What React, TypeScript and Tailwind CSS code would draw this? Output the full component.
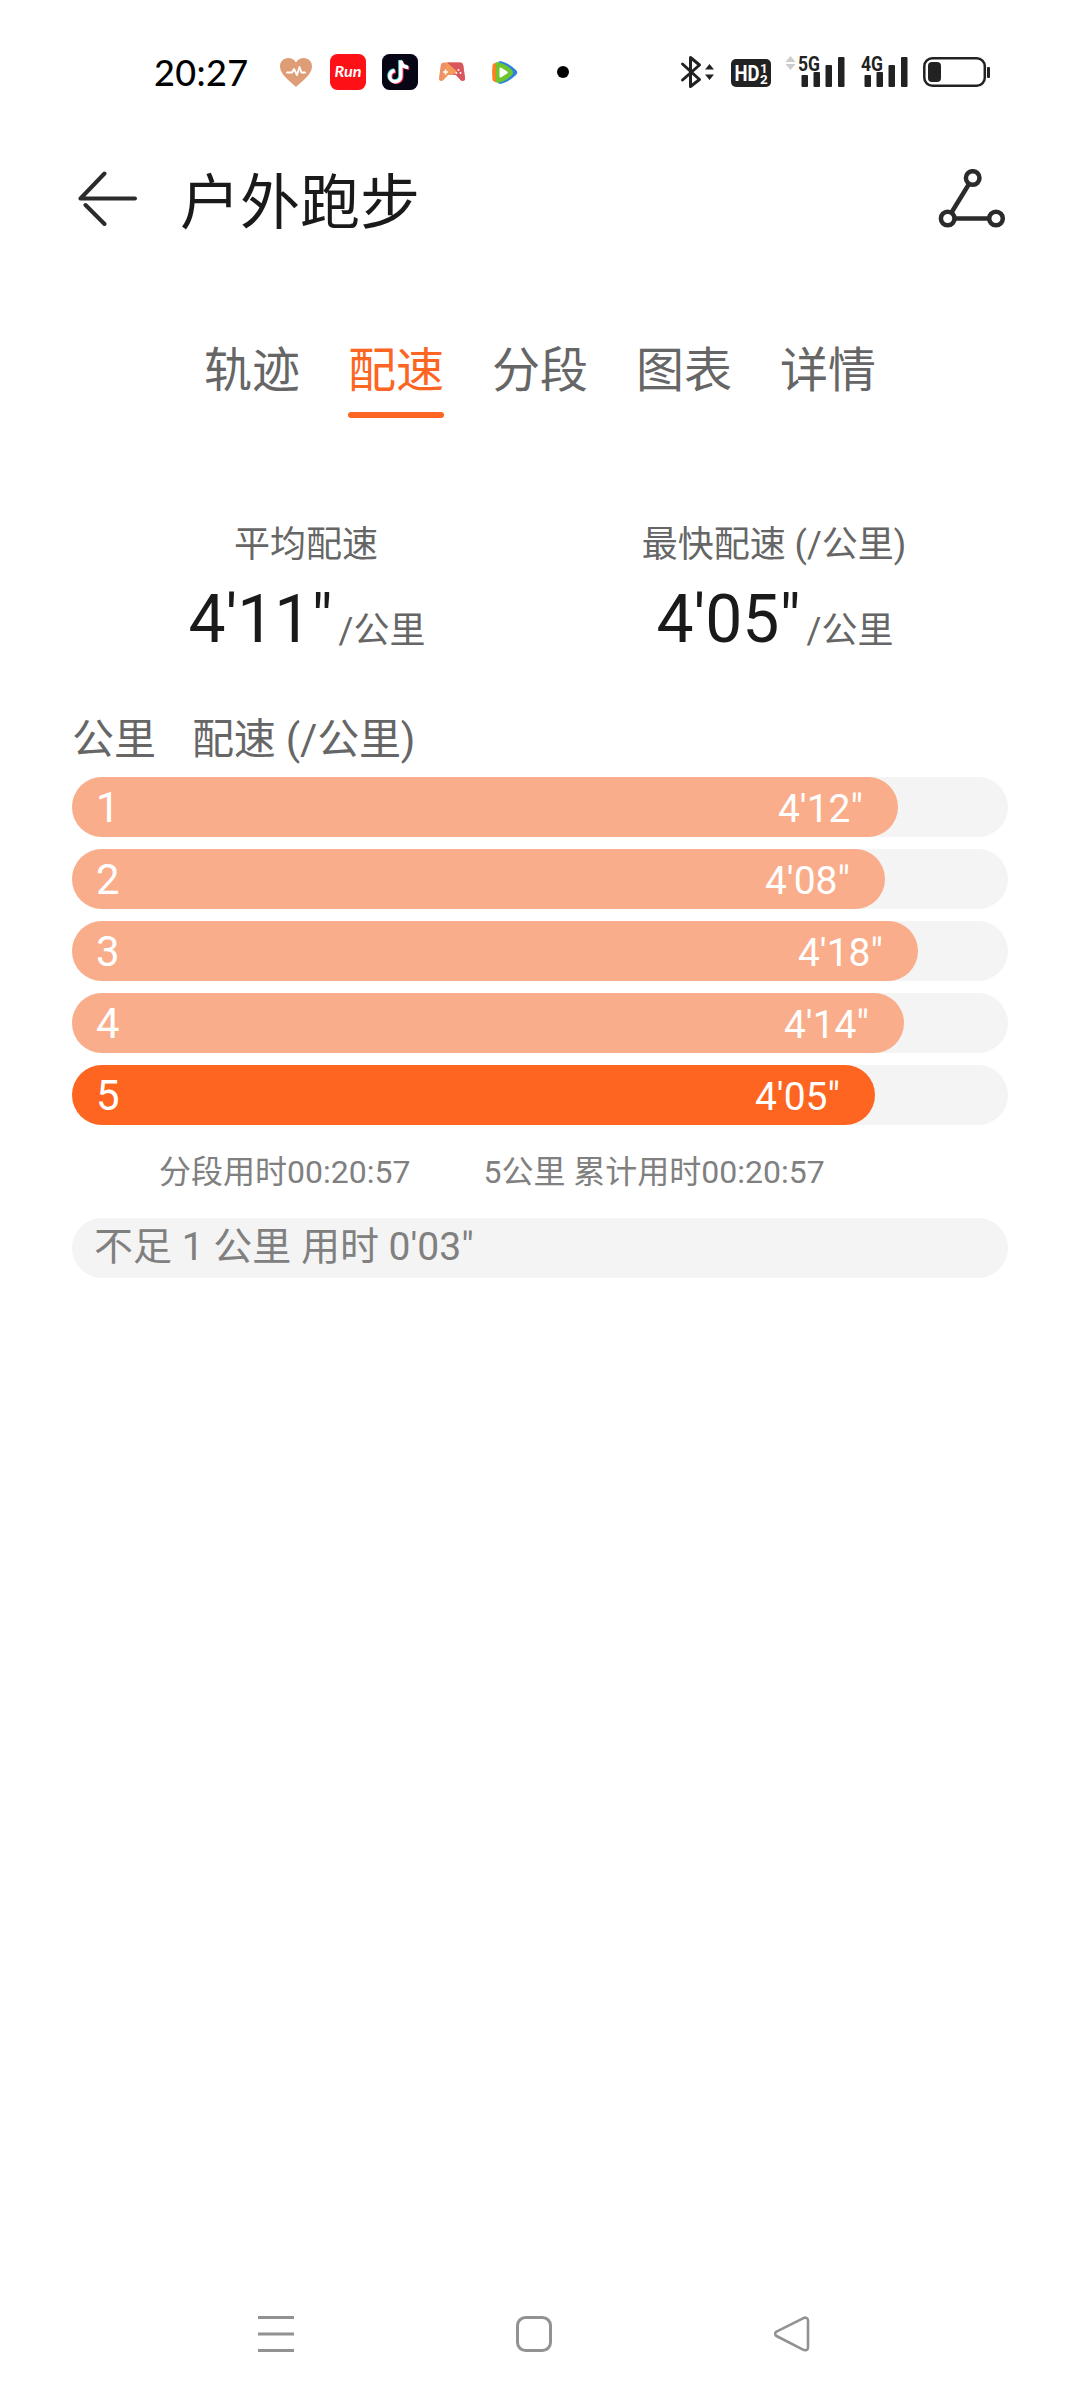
const TABS = ['轨迹', '配速', '分段', '图表', '详情'];

const STATS = [
  { label: '平均配速', value: '4\'11"' },
  { label: '最快配速 (/公里)', value: '4\'05"' },
];

const SPLITS = [
  { km: 1, pace: '4\'12"', width: 826 },
  { km: 2, pace: '4\'08"', width: 813 },
  { km: 3, pace: '4\'18"', width: 846 },
  { km: 4, pace: '4\'14"', width: 832 },
  { km: 5, pace: '4\'05"', width: 803, fastest: true },
];

function AppIcons() {
  return (
    <div className="flex items-center">
      <svg className="ml-8 h-9 w-8" viewBox="0 0 32 36">
        <path d="M16 33C11 28 0 20.500 0 12.500C0 7.500 3.600 4 8.300 4C11.500 4 14.400 5.700 16 8.500C17.600 5.700 20.500 4 23.700 4C28.400 4 32 7.500 32 12.500C32 20.500 21 28 16 33Z" fill="#de9d76" />
        <path d="M7 18.500h5l2-3.500 3 6 2.500-8 2 5.500H25" fill="none" stroke="#fff" strokeWidth="1.900" strokeLinecap="round" strokeLinejoin="round" />
      </svg>
      <svg className="ml-[18px] size-9" viewBox="0 0 36 36">
        <rect width="36" height="36" rx="7.500" fill="#fd1016" />
        <text x="4.500" y="23" fontFamily="Lato, sans-serif" fontStyle="italic" fontWeight="700" fontSize="15" fill="#fff" textLength="27" lengthAdjust="spacingAndGlyphs">Run</text>
      </svg>
      <svg className="ml-4 size-9" viewBox="0 0 36 36">
        <rect width="36" height="36" rx="7.500" fill="#070614" />
        <g fill="none" strokeWidth="3.500">
          <path d="M19 6.500v15.500a5.500 5.500 0 1 1-6-5.500M19 6.500c.6 4 3.400 6.500 7.500 6.700" stroke="#4de8e6" transform="translate(-1 -.4)" />
          <path d="M19 6.500v15.500a5.500 5.500 0 1 1-6-5.500M19 6.500c.6 4 3.400 6.500 7.500 6.700" stroke="#f5305c" transform="translate(.8 1)" />
          <path d="M19 6.500v15.500a5.500 5.500 0 1 1-6-5.500M19 6.500c.6 4 3.400 6.500 7.500 6.700" stroke="#fff" transform="translate(-.2 .2)" />
        </g>
      </svg>
      <svg className="ml-[21px] h-5 w-[26px]" viewBox="0 0 26 20">
        <path d="M5 .5h16c2 0 3 1 3.300 3L26 16c.3 3-2.500 4-4.500 2L17 13H9l-4.500 5C2.500 20-.3 19 0 16L1.700 3.500C2 1.500 3 .5 5 .5Z" fill="#f09067" />
        <path d="M8 .5h13c2 0 3 1 3.300 3L26 16c.3 3-2.500 4-4.500 2L17 13h-3l3.500-3Z" fill="#d9575c" />
        <path d="M8 .5 18 9.500l-8 3.500H9l-6 5Z" fill="#f29b5b" />
        <path d="M6.500 7.500v5M4 10h5" stroke="#fff" strokeWidth="1.500" />
        <g fill="#fff">
          <circle cx="19.500" cy="8" r="1" />
          <circle cx="17.300" cy="11" r="1" />
          <circle cx="21.500" cy="11" r="1" />
        </g>
      </svg>
      <svg className="ml-[27px] h-[23px] w-[26px]" viewBox="0 0 26 23">
        <path d="M6 2C6 0 8 0 10 .5c5 1.500 9 4 14 8.500 1.700 1.500 1.700 3.500 0 5-5 4.500-9 7-14 8.500-2 .5-4 .5-4-1.500Z" fill="#2d83dc" />
        <path d="M2.500 3C3 1.500 5 1 7 1.600c5 1.200 9 3.400 12.500 6.900 2 2 2 4 0 6C16 18 12 20.500 7 21.500c-2 .5-4 0-4.500-1.500Z" fill="#6fc52f" />
        <path d="M.5 4.500C.8 2.800 1.800 2 4 2v19C1.800 21 .8 20 .5 18.500 0 14 0 9 .5 4.500Z" fill="#fb8123" />
        <path d="M7.500 7.500c0-1 .9-1.200 1.700-.8l6 3.800c.8.500.8 1.400 0 2l-6 3.800c-.8.400-1.700.2-1.700-.8Z" fill="#fff" />
      </svg>
      <span className="ml-[39px] size-3 rounded-full bg-black" />
    </div>
  );
}

function Signal({ label }: { label: string }) {
  return (
    <svg className="h-12 w-[47px]" viewBox="0 -6 47 48">
      <text x="0" y="16.500" fontFamily="Roboto, sans-serif" fontWeight="700" fontSize="20.500" fill="#222" textLength="22" lengthAdjust="spacingAndGlyphs">{label}</text>
      <g fill="#222">
        <rect x="3.500" y="21" width="6.500" height="12" rx="1" />
        <rect x="15.500" y="18" width="6.500" height="15" rx="1" />
        <rect x="27.500" y="11" width="6.500" height="22" rx="1" />
        <rect x="40" y="3" width="6.500" height="30" rx="1" />
      </g>
    </svg>
  );
}

function StatusBar() {
  return (
    <div className="flex h-36 shrink-0 items-center pl-[154px]">
      <span className="w-[94px] font-['Lato',sans-serif] text-[36px] leading-9 font-medium tracking-[0.4px] whitespace-nowrap text-black">20:27</span>
      <AppIcons />
      <svg className="ml-[111px] h-9 w-[35px]" viewBox="0 0 35 36">
        <path d="M2.500 10 19.500 25.500 10.500 32.500V3.500L19.500 11 2.500 26" fill="none" stroke="#222" strokeWidth="3" strokeLinecap="round" strokeLinejoin="round" />
        <path d="m29.500 10 4.500 5.500h-9ZM29.500 26l4.500-5.500h-9Z" fill="#222" />
      </svg>
      <svg className="ml-4 h-9 w-10" viewBox="0 0 40 36">
        <rect y="5" width="40" height="28" rx="5" fill="#222" />
        <g fontFamily="Roboto, sans-serif" fontWeight="700" fill="#fff">
          <text x="3.500" y="26.700" fontSize="22.500" textLength="25" lengthAdjust="spacingAndGlyphs">HD</text>
          <text x="29" y="18.500" fontSize="13.500">1</text>
          <text x="29" y="29.700" fontSize="13.500">2</text>
        </g>
      </svg>
      <svg className="ml-[14px] h-9 w-[13px]" viewBox="0 0 13 36">
        <path d="M5.500 2 10.500 8H.5ZM5.500 16l5-6H.5Z" fill="#ccc" />
      </svg>
      <Signal label="5G" />
      <div className="ml-4 flex">
        <Signal label="4G" />
      </div>
      <svg className="ml-[15px] h-9 w-[68px]" viewBox="0 0 68 36">
        <rect x="1.300" y="4.300" width="60.500" height="27.500" rx="8" fill="none" stroke="#222" strokeWidth="2.500" />
        <rect x="5" y="8" width="13" height="20" rx="4" fill="#222" />
        <rect x="64" y="13" width="3" height="11" rx="1" fill="#222" />
      </svg>
    </div>
  );
}

function Header() {
  return (
    <header className="flex h-[110px] shrink-0 items-center pr-[74px] pl-[78px]">
      <svg className="h-[60px] w-[60px]" viewBox="0 0 60 60" fill="none" stroke="#2b2b2b" strokeWidth="4" strokeLinecap="round">
        <path d="M26.500 4.500 2.500 29.500H57M7.500 36 26.500 55" strokeLinejoin="round" />
      </svg>
      <h1 className="ml-[42px] flex-1 pt-[9px] text-[60px] leading-[60px] text-[#1a1a1a]">户外跑步</h1>
      <svg className="h-[60px] w-[68px]" viewBox="0 0 68 60" fill="none" stroke="#2b2b2b" strokeWidth="4.500">
        <circle cx="34.700" cy="9" r="6.800" />
        <circle cx="9.700" cy="49.500" r="6.800" />
        <circle cx="58" cy="49.500" r="6.800" />
        <path d="M31 15 13.500 43.500M16.500 49.500H51" />
      </svg>
    </header>
  );
}

function Tabs() {
  return (
    <nav className="mt-[93px] flex justify-center gap-12">
      {TABS.map((tab) => {
        const active = tab === '配速';
        return (
          <div key={tab} className="flex w-24 flex-col">
            <span className={`text-[48px] leading-[48px] ${active ? 'text-[#fc6522]' : 'text-[#666]'}`}>{tab}</span>
            <span className={`mt-[17px] h-1.5 rounded-full ${active ? 'bg-[#fc6522]' : ''}`} />
          </div>
        );
      })}
    </nav>
  );
}

function Stats() {
  return (
    <section className="mt-[109px] grid grid-cols-2 px-[72px] text-center">
      {STATS.map((s) => (
        <div key={s.label}>
          <p className="text-[36px] leading-9 text-[#666]">{s.label}</p>
          <p className="mt-6 flex items-baseline justify-center gap-1.5 pl-0.5 text-[66px] leading-[66px] text-[#1a1a1a]">
            {s.value}
            <span className="translate-y-px text-[36px] leading-9 text-[#666]">/公里</span>
          </p>
        </div>
      ))}
    </section>
  );
}

function Splits() {
  return (
    <section className="mt-[66px] px-[72px]">
      <div className="flex gap-9 text-[42px] leading-[42px] text-[#666]">
        <span>公里</span>
        <span className="tracking-[-0.2px]">配速 (/公里)</span>
      </div>
      <div className="mt-4 flex flex-col gap-3">
        {SPLITS.map((s) => (
          <div key={s.km} className="h-[60px] rounded-full bg-[#f4f4f4]">
            <div
              className={`flex h-[60px] items-baseline justify-between rounded-full pr-[35px] pl-6 text-white ${s.fastest ? 'bg-[#fd6521]' : 'bg-[#f9ad8a]'}`}
              style={{ width: s.width }}
            >
              <span className="text-[42px] leading-[61px]">{s.km}</span>
              <span className="text-[39px] leading-[61px]">{s.pace}</span>
            </div>
          </div>
        ))}
      </div>
      <div className="mt-[31px] flex gap-[73px] pl-[87px] text-[32px] leading-8 text-[#808080]">
        <span>分段用时00:20:57</span>
        <span>5公里 累计用时00:20:57</span>
      </div>
      <div className="mt-[30px] h-[60px] rounded-full bg-[#f4f4f4] pl-[22px] text-[39px] leading-[58px] text-[#808080]">
        不足 1 公里 用时 0'03"
      </div>
    </section>
  );
}

function NavBar() {
  return (
    <footer className="mt-auto flex h-[132px] items-center gap-[222px] pl-[258px]">
      <svg className="size-9" viewBox="0 0 36 36" stroke="#929292" strokeWidth="3">
        <path d="M0 1.500h36M0 18h36M0 34.500h36" />
      </svg>
      <svg className="size-9" viewBox="0 0 36 36" fill="none" stroke="#929292" strokeWidth="3">
        <rect x="1.500" y="1.500" width="33" height="33" rx="8" />
      </svg>
      <svg className="size-9" viewBox="0 0 36 36" fill="none" stroke="#929292" strokeWidth="2.600">
        <path d="M2.500 15.700 29 2.300C31.500 1 34 1.800 34 4.500V31.500C34 34 31.500 35 29 33.700L2.500 20C.7 19 .7 16.700 2.500 15.700Z" />
      </svg>
    </footer>
  );
}

export default function App() {
  return (
    <main lang="zh-CN" className="flex h-[2400px] w-[1080px] flex-col overflow-hidden bg-white font-['Roboto','Noto_Sans_CJK_SC',sans-serif]">
      <StatusBar />
      <Header />
      <Tabs />
      <Stats />
      <Splits />
      <NavBar />
    </main>
  );
}
